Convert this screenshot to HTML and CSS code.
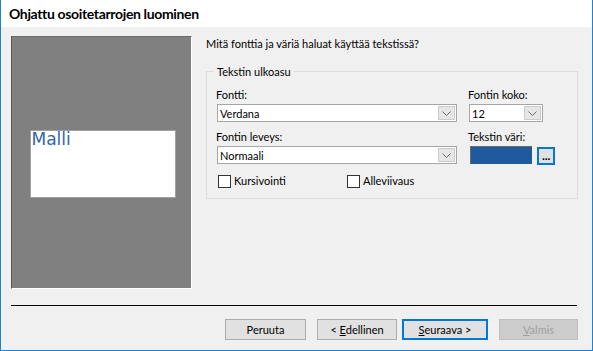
FILE: index.html
```html
<!DOCTYPE html>
<html lang="fi">
<head>
<meta charset="utf-8">
<title>Ohjattu osoitetarrojen luominen</title>
<link rel="stylesheet" href="styles.css">
</head>
<body>
<div class="window">
  <div class="titlebar">Ohjattu osoitetarrojen luominen</div>
  <div class="body">
    <div class="main">
      <div class="preview">
        <div class="sample">Malli</div>
      </div>
      <div class="content">
        <p class="question">Mitä fonttia ja väriä haluat käyttää tekstissä?</p>
        <fieldset class="group">
          <legend>Tekstin ulkoasu</legend>
          <div class="grid">
            <div class="field">
              <div class="label">Fontti:</div>
              <div class="combo wide"><span class="value">Verdana</span><span class="drop"><svg width="9" height="5" viewBox="0 0 9 5"><polyline points="0.5,0.5 4.5,4.5 8.5,0.5" fill="none" stroke="#6d6d6d" stroke-width="1"/></svg></span></div>
            </div>
            <div class="field">
              <div class="label">Fontin koko:</div>
              <div class="combo narrow"><span class="value">12</span><span class="drop"><svg width="9" height="5" viewBox="0 0 9 5"><polyline points="0.5,0.5 4.5,4.5 8.5,0.5" fill="none" stroke="#6d6d6d" stroke-width="1"/></svg></span></div>
            </div>
            <div class="field second">
              <div class="label">Fontin leveys:</div>
              <div class="combo wide"><span class="value">Normaali</span><span class="drop"><svg width="9" height="5" viewBox="0 0 9 5"><polyline points="0.5,0.5 4.5,4.5 8.5,0.5" fill="none" stroke="#6d6d6d" stroke-width="1"/></svg></span></div>
            </div>
            <div class="field second">
              <div class="label">Tekstin väri:</div>
              <div class="colorrow">
                <div class="swatch"></div>
                <button class="more">...</button>
              </div>
            </div>
            <div class="checks">
              <label class="check first"><span class="box"></span>Kursivointi</label>
              <label class="check"><span class="box"></span>Alleviivaus</label>
            </div>
          </div>
        </fieldset>
      </div>
    </div>
    <div class="separator"></div>
    <div class="buttons">
      <button class="btn b-cancel">Peruuta</button>
      <button class="btn b-prev">&lt; <u>E</u>dellinen</button>
      <button class="btn b-next default"><u>S</u>euraava &gt;</button>
      <button class="btn b-finish disabled"><u>V</u>almis</button>
    </div>
  </div>
</div>
</body>
</html>
```

FILE: styles.css
```css
* { box-sizing: border-box; }
html, body { margin: 0; padding: 0; background: #ffffff; }
body {
  font-family: Lato, "Liberation Sans", sans-serif;
  font-size: 11px;
  color: #000000;
}
.window {
  width: 593px;
  height: 351px;
  border: 1px solid #1883d7;
  border-top: none;
  display: flex;
  flex-direction: column;
  background: #f0f0f0;
}
.titlebar {
  height: 27px;
  line-height: 27px;
  background: #ffffff;
  padding-left: 8px;
  font-weight: bold;
  font-size: 14px;
  letter-spacing: -0.35px;
  color: #000000;
}
.body {
  flex: 1;
  padding: 9px 14px 0 10px;
}
.main {
  display: flex;
  height: 253px;
}
.preview {
  width: 181px;
  height: 253px;
  background: #808080;
  border-style: solid;
  border-width: 1px;
  border-color: #6b6b6b #ffffff #ffffff #5e554d;
  display: flex;
  align-items: center;
  justify-content: center;
  padding-left: 2px;
  padding-top: 2px;
}
.sample {
  width: 146px;
  height: 68px;
  background: #ffffff;
  border: 1px solid #a0a0a0;
  font-family: "DejaVu Sans", Verdana, sans-serif;
  font-size: 17px;
  line-height: 16px;
  color: #2e66a8;
  padding-left: 1px;
}
.content {
  margin-left: 14px;
  width: 372px;
}
.question {
  margin: 0;
  line-height: 15px;
}
.group {
  margin: 13px 0 0 0;
  border: 1px solid #dcdcdc;
  padding: 8px 9px 9px 10px;
  min-width: 0;
}
.group legend {
  padding: 0 3px;
  margin-left: -3px;
  line-height: 15px;
}
.grid {
  display: grid;
  grid-template-columns: 240px 86px;
  column-gap: 12px;
}
.field.second { margin-top: 7px; }
.label {
  line-height: 15px;
  margin-bottom: 2px;
  margin-left: -1px;
}
.combo {
  height: 18px;
  background: #ffffff;
  border: 1px solid #a6a6a6;
  display: flex;
  align-items: center;
  justify-content: space-between;
  padding: 0 1px 0 2px;
}
.combo.wide { width: 240px; }
.combo.narrow { width: 74px; }
.combo .value { line-height: 15px; }
.drop {
  width: 17px;
  height: 14px;
  background: #e6e6e6;
  border: 1px solid #cccccc;
  display: flex;
  align-items: center;
  justify-content: center;
  padding-top: 1px;
}
.drop svg { display: block; }
.colorrow {
  display: flex;
  align-items: flex-start;
}
.swatch {
  width: 73px;
  height: 18px;
  margin-left: 1px;
  background: #1f5a9f;
  border-style: solid;
  border-width: 1px;
  border-color: #6a6a6a #1f5a9f #1f5a9f #6a6a6a;
}
.more {
  width: 20px;
  height: 18px;
  margin-left: 5px;
  margin-top: 1px;
  padding: 0;
  background: #e1e1e1;
  border: 2px solid #0078d7;
  font-family: Lato, "Liberation Sans", sans-serif;
  font-size: 12px;
  font-weight: bold;
  line-height: 10px;
  color: #000000;
}
.checks {
  grid-column: 1 / span 2;
  display: flex;
  margin-top: 8px;
  line-height: 16px;
}
.check {
  display: flex;
  align-items: center;
  margin-left: 1px;
}
.check.first { width: 128px; }
.box {
  width: 13px;
  height: 13px;
  background: #ffffff;
  border: 1px solid #333333;
  margin-right: 3px;
}
.separator {
  height: 1px;
  background: #000000;
  margin: 16px 1px 0 0;
}
.buttons {
  display: flex;
  justify-content: flex-end;
  margin-top: 13px;
}
.btn {
  height: 21px;
  padding: 0;
  background: #e1e1e1;
  border: 1px solid #adadad;
  font-family: Lato, "Liberation Sans", sans-serif;
  font-size: 11px;
  color: #000000;
}
.b-cancel { width: 81px; }
.b-prev { width: 80px; margin-left: 11px; }
.b-next { width: 86px; margin-left: 5px; }
.b-finish { width: 79px; margin-left: 11px; }
.btn.default { border: 2px solid #0078d7; }
.btn.disabled {
  background: #cccccc;
  border-color: #bfbfbf;
  color: #a0a0a0;
}
```
